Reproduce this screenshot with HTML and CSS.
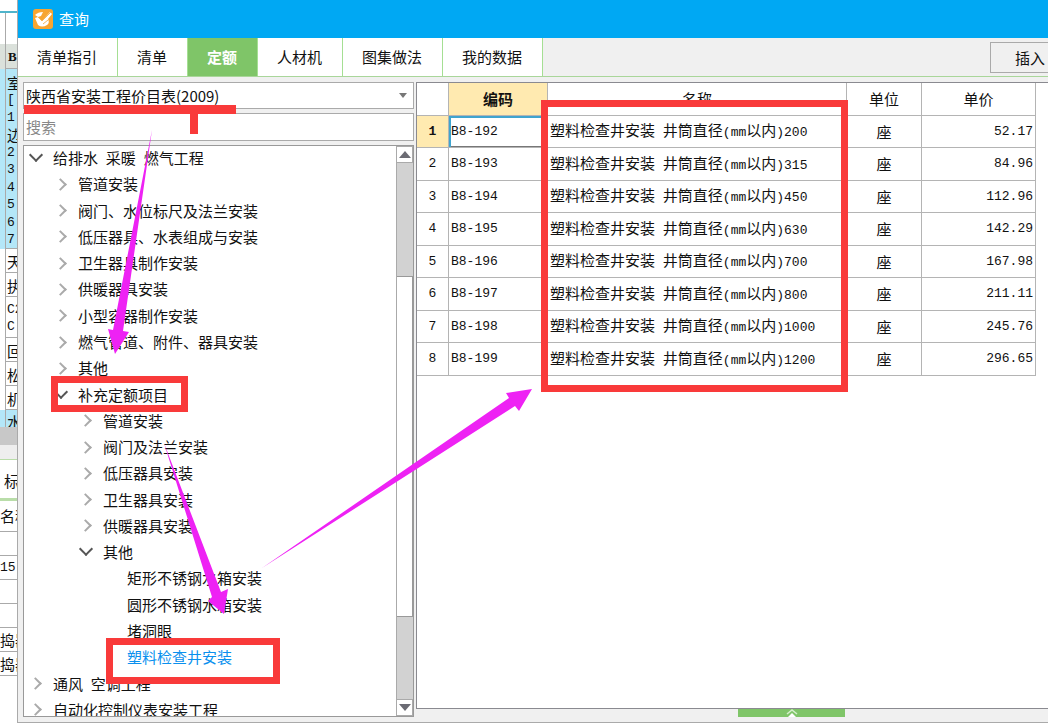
FILE: index.html
```html
<!DOCTYPE html>
<html lang="zh-CN">
<head>
<meta charset="utf-8">
<title>查询</title>
<link rel="stylesheet" href="styles.css">
</head>
<body>
<div class="desktop">
  <div class="backdrop">
    <div class="back-top"></div>
    <div class="back-gap"></div>
    <div class="back-row back-head">B</div>
    <div class="back-row back-item"><span>室</span><span class="mono">[</span><span class="mono">1</span><span>边</span><span class="mono">2</span><span class="mono">3</span><span class="mono">4</span><span class="mono">5</span><span class="mono">6</span><span class="mono">7</span></div>
    <div class="back-row">天</div>
    <div class="back-row">执</div>
    <div class="back-row back-double mono"><span>C2</span><span>C</span></div>
    <div class="back-row">回</div>
    <div class="back-row">松</div>
    <div class="back-row">机</div>
    <div class="back-row back-last">水</div>
    <div class="back-scroll"></div>
    <div class="back-tab">标</div>
    <div class="back-line back-name">名称</div>
    <div class="back-line"></div>
    <div class="back-line mono">15</div>
    <div class="back-line"></div>
    <div class="back-line"></div>
    <div class="back-line">捣器</div>
    <div class="back-line">捣器</div>
  </div>

  <main class="window">
    <header class="titlebar">
      <svg class="logo" width="20" height="20" viewBox="0 0 20 20" aria-hidden="true">
        <rect width="20" height="20" rx="3" fill="#f7a531"/>
        <path d="M2 6Q5 3 10 3l-2 4-3 1z" fill="#fff"/>
        <path d="M2 9l3-1 4 4 8-9 2 2-4 5q2 4-1 6-5 3-9 0z" fill="#fff"/>
        <path d="M5 8l4 4 9-9M10 15l5-4" fill="none" stroke="#f5b65a" stroke-width="1"/>
      </svg>
      <h1>查询</h1>
    </header>

    <nav class="toolbar">
      <button class="tab" type="button">清单指引</button>
      <button class="tab" type="button">清单</button>
      <button class="tab active" type="button">定额</button>
      <button class="tab" type="button">人材机</button>
      <button class="tab" type="button">图集做法</button>
      <button class="tab" type="button">我的数据</button>
      <button class="insert" type="button">插入</button>
    </nav>

    <div class="content">
      <section class="side">
        <div class="combo">
          <select aria-label="定额库"><option>陕西省安装工程价目表(2009)</option></select>
          <svg width="8" height="5" viewBox="0 0 8 5" aria-hidden="true"><path d="M0 0h8L4 5z" fill="#777"/></svg>
        </div>
        <input class="search" type="text" placeholder="搜索" aria-label="搜索">
        <div class="treebox">
          <ul class="tree">
            <li class="open">给排水<span class="mono"> </span>采暖<span class="mono"> </span>燃气工程</li>
            <li class="closed l1">管道安装</li>
            <li class="closed l1">阀门、水位标尺及法兰安装</li>
            <li class="closed l1">低压器具、水表组成与安装</li>
            <li class="closed l1">卫生器具制作安装</li>
            <li class="closed l1">供暖器具安装</li>
            <li class="closed l1">小型容器制作安装</li>
            <li class="closed l1">燃气管道、附件、器具安装</li>
            <li class="closed l1">其他</li>
            <li class="open l1">补充定额项目</li>
            <li class="closed l2">管道安装</li>
            <li class="closed l2">阀门及法兰安装</li>
            <li class="closed l2">低压器具安装</li>
            <li class="closed l2">卫生器具安装</li>
            <li class="closed l2">供暖器具安装</li>
            <li class="open l2">其他</li>
            <li class="l3">矩形不锈钢水箱安装</li>
            <li class="l3">圆形不锈钢水箱安装</li>
            <li class="l3">堵洞眼</li>
            <li class="l3 current">塑料检查井安装</li>
            <li class="closed">通风<span class="mono"> </span>空调工程</li>
            <li class="closed">自动化控制仪表安装工程</li>
          </ul>
          <div class="scrollbar">
            <button type="button" aria-label="向上滚动"><svg width="12" height="7" viewBox="0 0 12 7"><path d="M0 7h12L6 0z" fill="#6b6b73"/></svg></button>
            <div class="track-above"></div>
            <div class="thumb"></div>
            <div class="track-below"></div>
            <button type="button" aria-label="向下滚动"><svg width="12" height="7" viewBox="0 0 12 7"><path d="M0 0h12L6 7z" fill="#6b6b73"/></svg></button>
          </div>
        </div>
      </section>

      <section class="main">
        <div class="sheet">
          <table>
            <colgroup><col class="c-num"><col class="c-code"><col><col class="c-unit"><col class="c-price"></colgroup>
            <thead>
              <tr><th></th><th class="sorted">编码</th><th>名称</th><th>单位</th><th>单价</th></tr>
            </thead>
            <tbody>
              <tr class="selected"><th>1</th><td class="code">B8-192</td><td>塑料检查井安装<span class="mono"> </span>井筒直径<span class="mono">(mm</span>以内<span class="mono">)200</span></td><td class="unit">座</td><td class="price">52.17</td></tr>
              <tr><th>2</th><td class="code">B8-193</td><td>塑料检查井安装<span class="mono"> </span>井筒直径<span class="mono">(mm</span>以内<span class="mono">)315</span></td><td class="unit">座</td><td class="price">84.96</td></tr>
              <tr><th>3</th><td class="code">B8-194</td><td>塑料检查井安装<span class="mono"> </span>井筒直径<span class="mono">(mm</span>以内<span class="mono">)450</span></td><td class="unit">座</td><td class="price">112.96</td></tr>
              <tr><th>4</th><td class="code">B8-195</td><td>塑料检查井安装<span class="mono"> </span>井筒直径<span class="mono">(mm</span>以内<span class="mono">)630</span></td><td class="unit">座</td><td class="price">142.29</td></tr>
              <tr><th>5</th><td class="code">B8-196</td><td>塑料检查井安装<span class="mono"> </span>井筒直径<span class="mono">(mm</span>以内<span class="mono">)700</span></td><td class="unit">座</td><td class="price">167.98</td></tr>
              <tr><th>6</th><td class="code">B8-197</td><td>塑料检查井安装<span class="mono"> </span>井筒直径<span class="mono">(mm</span>以内<span class="mono">)800</span></td><td class="unit">座</td><td class="price">211.11</td></tr>
              <tr><th>7</th><td class="code">B8-198</td><td>塑料检查井安装<span class="mono"> </span>井筒直径<span class="mono">(mm</span>以内<span class="mono">)1000</span></td><td class="unit">座</td><td class="price">245.76</td></tr>
              <tr><th>8</th><td class="code">B8-199</td><td>塑料检查井安装<span class="mono"> </span>井筒直径<span class="mono">(mm</span>以内<span class="mono">)1200</span></td><td class="unit">座</td><td class="price">296.65</td></tr>
            </tbody>
          </table>
        </div>
        <button class="drawer" type="button" aria-label="展开">
          <svg width="12" height="8" viewBox="0 0 12 8"><path d="M1 5l5-4 5 4" fill="none" stroke="#d6efcd" stroke-width="1.5"/><path d="M2 8l4-4 4 4z" fill="#fff"/></svg>
        </button>
      </section>
    </div>
  </main>

  <svg class="marks" width="1048" height="726" viewBox="0 0 1048 726" aria-hidden="true">
    <g fill="#f93a3a">
      <path d="M24 105h212v9h-38v20h-8v-20h-166z"/>
      <path fill-rule="evenodd" d="M51 376h137v36h-137zM58 383v22h123v-22z"/>
      <path fill-rule="evenodd" d="M106 638h174v46h-174zM113 645v32h160v-32z"/>
      <path fill-rule="evenodd" d="M541 100h307v292h-307zM548 107v278h293v-278z"/>
    </g>
    <g fill="#ee22f4">
      <path d="M152 130L123 331 129 332 115 354 108 329 113 330z"/>
      <path d="M164 443L221 592 228 589 224 614 208 601 212 597z"/>
      <path d="M262 568L509 398 506 393 532 389 519 411 515 406z"/>
    </g>
  </svg>
</div>
</body>
</html>
```
FILE: styles.css
```css
* { box-sizing: border-box; }

body {
  margin: 0;
  color: #111;
  background: #fff;
  font-family: "Noto Sans CJK SC", sans-serif;
  font-size: 15px;
  line-height: 20px;
}

button, select, input {
  font: inherit;
  color: inherit;
  margin: 0;
  padding: 0;
  border-radius: 0;
}

.mono { font-family: "Liberation Mono", "Noto Sans CJK SC", monospace; font-size: 13px; }

.desktop {
  position: relative;
  display: flex;
  height: 100vh;
  min-height: 640px;
  overflow: hidden;
}

/* Worksheet showing behind the dialog */
.backdrop {
  flex: none;
  width: 17px;
  overflow: hidden;
  white-space: nowrap;
}
.back-top { height: 13px; border-bottom: 2px solid #4fb4cb; }
.back-gap { height: 31px; margin-left: 5px; border-left: 1px solid #aaa; }
.back-row {
  height: 24px;
  padding-left: 1px;
  border-left: 1px solid #aaa;
  border-bottom: 1px solid #aaa;
  margin-left: 5px;
  line-height: 26px;
}
.back-head {
  height: 25px;
  padding-left: 2px;
  font-family: "Liberation Serif", serif;
  font-weight: bold;
  font-size: 13px;
  background: #dbe1db;
  box-shadow: -5px 0 #dbe1db;
}
.back-item {
  display: flex;
  flex-direction: column;
  justify-content: space-between;
  height: 180px;
  padding-top: 5px;
  background: #b4e7f8;
  box-shadow: -5px 0 #b4e7f8;
}
.back-item span { height: 17px; line-height: 17px; }
.back-double { display: flex; flex-direction: column; height: 41px; padding-top: 4px; }
.back-double span { height: 17px; line-height: 18px; }
.back-last { height: 17px; background: #b4e7f8; box-shadow: -5px 0 #b4e7f8; border-bottom: 0; line-height: 24px; overflow: hidden; }
.back-scroll { height: 18px; background: #c8c8c8; }
.back-tab {
  height: 56px;
  padding: 26px 0 0 4px;
  border-bottom: 3px solid #b9dda9;
  background: linear-gradient(#eee 14px, #b9dda9 14px 15px, #fff 15px);
}
.back-line { height: 24px; border-bottom: 1px solid #aaa; line-height: 24px; }
.back-line.back-name { height: 31px; line-height: 30px; }

/* Dialog */
.window {
  flex: 1;
  min-width: 0;
  display: flex;
  flex-direction: column;
  margin-bottom: 3px;
  border-left: 1px solid #aaa;
  border-bottom: 1px solid #aaa;
  background: #f0f0f0;
}
.titlebar {
  flex: none;
  display: flex;
  align-items: center;
  gap: 6px;
  height: 38px;
  padding-left: 15px;
  color: #fff;
  background: #00a8f3;
}
.titlebar h1 { margin: 0; font-size: 15px; font-weight: normal; }

.toolbar {
  flex: none;
  display: flex;
  align-items: stretch;
  height: 39px;
  overflow: hidden;
  border-bottom: 1px solid #a9d69a;
}
.tab {
  flex: none;
  padding: 0 20px 0 19px;
  border: 0;
  border-right: 1px solid #a5df93;
  background: #fff;
}
.tab.active { color: #fff; font-weight: bold; background: #7fc568; }
.insert {
  flex: none;
  width: 80px;
  height: 31px;
  margin: 4px -22px 0 auto;
  border: 1px solid #aaa;
  background: #f0f0f0;
}

.content {
  flex: 1;
  min-height: 0;
  display: flex;
  gap: 2px;
  padding: 5px 0 5px 5px;
}

/* Left column */
.side {
  flex: none;
  width: 391px;
  display: flex;
  flex-direction: column;
  gap: 4px;
}
.combo {
  flex: none;
  display: flex;
  align-items: center;
  height: 27px;
  padding: 0 6px 0 2px;
  border: 1px solid #aaa;
  background: #fff;
}
.combo select {
  flex: 1;
  min-width: 0;
  border: 0;
  appearance: none;
  background: transparent;
}
.search {
  flex: none;
  height: 28px;
  padding: 0 2px 2px;
  border: 1px solid #aaa;
  background: #fff;
}
.search::placeholder { color: #888; opacity: 1; }
.treebox {
  flex: 1;
  min-height: 0;
  display: flex;
  overflow: hidden;
  border: 1px solid #999;
  background: #fff;
}
.tree {
  flex: 1;
  display: grid;
  grid-auto-rows: 1fr;
  height: calc(100% + 8px);
  margin: -1px 0 0;
  padding: 0;
  list-style: none;
}
.tree li {
  display: flex;
  align-items: center;
  padding-left: 28px;
  white-space: pre;
}
.tree .l1 { padding-left: 53px; }
.tree .l2 { padding-left: 78px; }
.tree .l3 { padding-left: 103px; }
.tree .current { color: #0a90ee; }
.tree .open::before,
.tree .closed::before {
  content: "";
  flex: none;
  width: 7px;
  height: 7px;
  border: solid #aaa;
  border-width: 2px 2px 0 0;
  transform: rotate(45deg);
}
.tree .closed::before { margin: 0 13px 0 -21px; }
.tree .open::before {
  width: 8px;
  height: 8px;
  margin: -6px 12px 0 -21px;
  border-color: #555;
  transform: rotate(135deg);
}

.scrollbar {
  flex: none;
  width: 17px;
  display: flex;
  flex-direction: column;
  border-left: 1px solid #aaa;
  background: #d2d2d2;
}
.scrollbar button {
  flex: none;
  display: grid;
  place-items: center;
  height: 17px;
  border: 1px solid #aaa;
  border-left: 0;
  background: #fff;
}
.track-above { flex: 113; }
.thumb { flex: 341; border: 1px solid #999; border-left: 0; background: #fff; }
.track-below { flex: 82; }

/* Result sheet */
.main {
  flex: 1;
  min-width: 0;
  display: flex;
  flex-direction: column;
}
.sheet {
  flex: 1;
  min-height: 0;
  padding-right: 12px;
  border: solid #8a8a90;
  border-width: 1px 0 1px 1px;
  background: #fff;
}
table {
  width: 100%;
  table-layout: fixed;
  border-collapse: separate;
  border-spacing: 0;
}
.c-num { width: 32px; }
.c-code { width: 99px; }
.c-unit { width: 75px; }
.c-price { width: 114px; }
th, td {
  height: 32px;
  padding: 0 2px;
  border-right: 1px solid #b4b4b4;
  border-bottom: 1px solid #b4b4b4;
  font-weight: normal;
  text-align: left;
  white-space: nowrap;
}
thead th,
tbody tr:nth-child(even) > * { height: 33px; }
th, .unit { text-align: center; }
tbody th, .code, .price { font-family: "Liberation Mono", monospace; font-size: 13px; }
.price { text-align: right; }
.sorted { font-weight: bold; background: #ffeab0; }
.selected th { font-weight: bold; background: #ffeab0; }
.selected .code { box-shadow: inset 2px 2px #3fa4cf, inset 0 -1px #777; }
.drawer {
  flex: none;
  display: grid;
  place-items: center;
  width: 107px;
  height: 8px;
  margin-left: 322px;
  border: 0;
  background: #7fc568;
}

/* Highlight boxes and arrows drawn over the dialog */
.marks {
  position: absolute;
  top: 0;
  left: 0;
  pointer-events: none;
}
```
